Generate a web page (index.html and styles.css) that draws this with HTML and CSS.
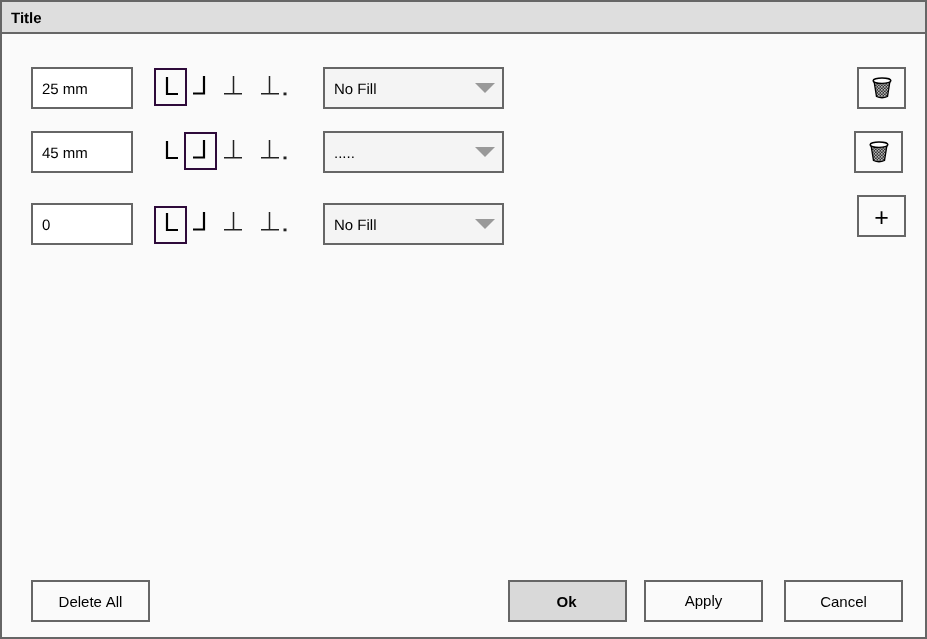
FILE: index.html
```html
<!DOCTYPE html>
<html lang="en">
<head>
<meta charset="utf-8">
<title>Title</title>
<link rel="stylesheet" href="styles.css">
</head>
<body>
<svg class="defs" width="0" height="0" aria-hidden="true">
  <defs>
    <pattern id="mesh" width="3" height="3" patternUnits="userSpaceOnUse">
      <rect width="3" height="3" fill="#333"/>
      <rect x="0.200" y="0.200" width="1.300" height="1.300" fill="#fff"/>
      <rect x="1.700" y="1.700" width="1.100" height="1.100" fill="#eee"/>
    </pattern>
    <symbol id="trash" viewBox="0 0 20 22">
      <path d="M2 4L4.500 19.500Q10 22 15.500 19.500L18 4Z" fill="url(#mesh)" stroke="#000" stroke-width="1.300"/>
      <ellipse cx="10" cy="3.700" rx="8.900" ry="2.700" fill="#fff" stroke="#000" stroke-width="1.400"/>
    </symbol>
    <symbol id="al" viewBox="0 0 33 38">
      <path d="M13 9V26H24" fill="none" stroke="#000" stroke-width="2.200"/>
    </symbol>
    <symbol id="ar" viewBox="0 0 33 38">
      <path d="M20 8V25.500H9" fill="none" stroke="#000" stroke-width="2.200"/>
    </symbol>
    <symbol id="ac" viewBox="0 0 33 38">
      <path d="M19.500 8V26M10 25.800H28" fill="none" stroke="#222" stroke-width="1.500"/>
    </symbol>
    <symbol id="ad" viewBox="0 0 40 38">
      <path d="M20.500 8V26M12 25.800H30" fill="none" stroke="#222" stroke-width="1.500"/>
      <rect x="34.500" y="24.500" width="3" height="2.800" fill="#222"/>
    </symbol>
  </defs>
</svg>
<div class="dialog">
  <header class="title">Title</header>
  <main class="body">
    <div class="row">
      <div class="field">25 mm</div>
      <div class="aligns">
        <span class="al sel"><svg class="gl"><use href="#al"/></svg></span>
        <span class="al"><svg class="gl"><use href="#ar"/></svg></span>
        <span class="al"><svg class="gl"><use href="#ac"/></svg></span>
        <span class="al wide"><svg class="gl"><use href="#ad"/></svg></span>
      </div>
      <div class="select">No Fill<i class="caret"></i></div>
      <button class="tool"><svg class="bin"><use href="#trash"/></svg></button>
    </div>
    <div class="row">
      <div class="field">45 mm</div>
      <div class="aligns">
        <span class="al"><svg class="gl"><use href="#al"/></svg></span>
        <span class="al sel"><svg class="gl"><use href="#ar"/></svg></span>
        <span class="al"><svg class="gl"><use href="#ac"/></svg></span>
        <span class="al wide"><svg class="gl"><use href="#ad"/></svg></span>
      </div>
      <div class="select">.....<i class="caret"></i></div>
      <button class="tool shifted"><svg class="bin"><use href="#trash"/></svg></button>
    </div>
    <div class="row last">
      <div class="field">0</div>
      <div class="aligns">
        <span class="al sel"><svg class="gl"><use href="#al"/></svg></span>
        <span class="al"><svg class="gl"><use href="#ar"/></svg></span>
        <span class="al"><svg class="gl"><use href="#ac"/></svg></span>
        <span class="al wide"><svg class="gl"><use href="#ad"/></svg></span>
      </div>
      <div class="select">No Fill<i class="caret"></i></div>
      <button class="tool plus">+</button>
    </div>
  </main>
  <footer class="actions">
    <button class="btn delete">Delete All</button>
    <button class="btn ok">Ok</button>
    <button class="btn apply">Apply</button>
    <button class="btn cancel">Cancel</button>
  </footer>
</div>
</body>
</html>
```
FILE: styles.css
```css
* { box-sizing: border-box; }
html, body { margin: 0; padding: 0; }
body { width: 927px; height: 639px; overflow: hidden; font-family: "Liberation Sans", Arial, sans-serif; font-size: 15px; color: #000; text-rendering: geometricPrecision; }
.defs { position: absolute; }
.dialog { width: 927px; height: 639px; border: 2px solid #666; background: #fafafa; display: flex; flex-direction: column; will-change: transform; }
.title { height: 32px; background: #dedede; border-bottom: 2px solid #666; font-weight: 700; padding: 8px 9px 0; line-height: 17px; }
.body { flex: 1; padding: 33px 19px 0 29px; display: flex; flex-direction: column; gap: 22px; }
.row { display: flex; align-items: flex-start; height: 42px; }
.row.last { margin-top: 8px; }
.field { width: 102px; height: 42px; border: 2px solid #666; background: #fff; padding: 0 9px; line-height: 42px; }
.aligns { display: flex; margin: 1px 0 0 21px; width: 169px; }
.last .aligns { margin-top: 3px; }
.al { width: 33px; height: 38px; border: 2px solid transparent; margin-right: -3px; flex: none; }
.al.wide { width: 40px; margin-left: 5px; }
.al.sel { border-color: #2e0a3a; }
.gl { display: block; width: 33px; height: 38px; margin: -2px; }
.last .gl { margin-top: -4px; }
.al.wide .gl { width: 40px; }
.select { width: 181px; height: 42px; border: 2px solid #666; background: #f4f4f4; padding: 0 9px; line-height: 42px; position: relative; }
.caret { position: absolute; right: 7px; top: 14px; width: 0; height: 0; border-left: 10px solid transparent; border-right: 10px solid transparent; border-top: 10px solid #999; }
.tool { margin-left: auto; width: 49px; height: 42px; border: 2px solid #666; background: #fafafa; padding: 0; display: flex; align-items: center; justify-content: center; font: 25px/1 "Liberation Sans", Arial, sans-serif; color: #000; }
.tool.shifted { position: relative; left: -3px; }
.tool.plus { margin-top: -8px; padding-top: 3px; }
.bin { width: 20px; height: 22px; display: block; }
.actions { height: 57px; display: flex; align-items: flex-start; padding: 0 0 0 29px; }
.btn { height: 42px; width: 119px; border: 2px solid #666; background: #fafafa; font: 15px "Liberation Sans", Arial, sans-serif; color: #000; padding: 0; }
.delete { margin-right: 358px; word-spacing: 0.5px; }
.ok { background: #d9d9d9; font-weight: 700; margin-right: 17px; padding-right: 2px; }
.apply { margin-right: 21px; padding-bottom: 2px; }
```
